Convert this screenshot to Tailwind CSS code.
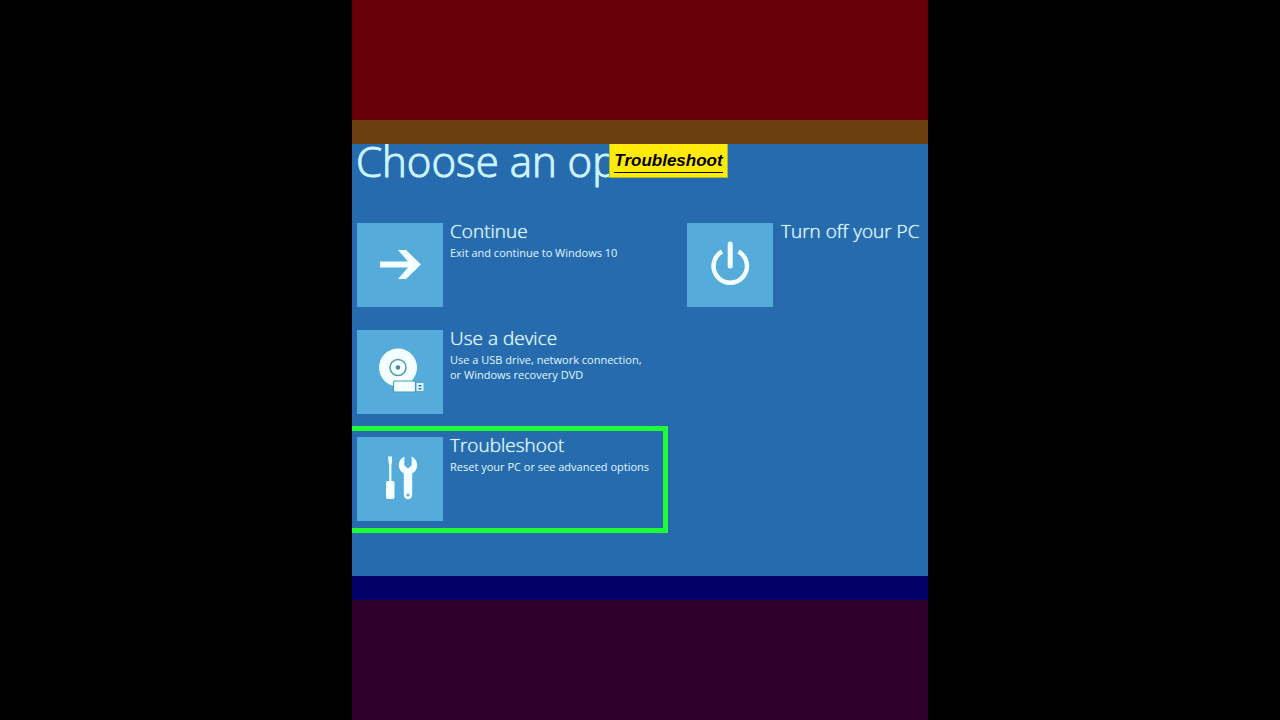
<!DOCTYPE html>
<html lang="en">
<head>
<meta charset="utf-8">
<meta name="viewport" content="width=device-width, initial-scale=1">
<title>Choose an option</title>
<script src="https://cdn.jsdelivr.net/npm/@tailwindcss/browser@4"></script>
</head>
<body class="bg-black font-['Open_Sans','Noto_Sans',sans-serif] text-[#e0f8ff]">
<div class="mx-auto flex min-h-screen max-w-xl flex-col">
  <div class="min-h-30 flex-1 bg-[#660006]"></div>
  <div class="h-6 bg-[#6b4011]"></div>
  <main class="relative bg-[#256bae] pb-[43px]">
    <h1 class="h-[68px] pl-1 text-[42px] leading-[34px] font-light whitespace-nowrap text-[#cdf5ff] [-webkit-text-stroke:1px_#cdf5ff]">Choose an option</h1>
    <div class="absolute top-0 left-[257px] flex h-[34px] w-[119px] items-center justify-center border border-t-0 border-[#a9b83c] bg-[#ffea0a] pt-0.5 font-['Liberation_Sans',sans-serif] text-black">
      <span class="border-b border-black text-[17px] leading-[22px] font-semibold italic">Troubleshoot</span>
    </div>
    <div class="flex items-start">
      <div class="flex w-[330px] shrink-0 flex-col items-start">
        <button type="button" class="flex w-[316px] items-start gap-[7px] border-[5px] border-l-0 border-transparent pt-1.5 pb-[7px] pl-[5px] text-left">
          <span class="flex h-[84px] w-[86px] shrink-0 items-center justify-center bg-[#55abda]">
            <svg class="h-[84px] w-[86px]" viewBox="0 0 86 84" fill="#f4ffff" aria-hidden="true"><path d="M23 38.500H51L41 27H49L64 41.500L49 56H41L51 44.500H23Z"/></svg>
          </span>
          <span class="flex flex-col whitespace-nowrap">
            <span class="h-[22px] text-[19px] leading-4 font-light [text-shadow:0_0_1px_#cdf5ff]">Continue</span>
            <span class="text-[11px] leading-[15px]">Exit and continue to Windows 10</span>
          </span>
        </button>
        <button type="button" class="flex w-[316px] items-start gap-[7px] border-[5px] border-l-0 border-transparent pt-1.5 pb-[7px] pl-[5px] text-left">
          <span class="flex h-[84px] w-[86px] shrink-0 items-center justify-center bg-[#55abda]">
            <svg class="h-[84px] w-[86px]" viewBox="0 0 86 84" aria-hidden="true">
              <circle cx="41" cy="37.500" r="19" fill="#f4ffff"/>
              <circle cx="41" cy="37.500" r="8" fill="none" stroke="#5299ad" stroke-width="1.500"/>
              <circle cx="41" cy="37.500" r="2.300" fill="#4689a2"/>
              <rect x="36.500" y="51" width="22" height="11" rx="1.500" fill="#f4ffff" stroke="#489bbd" stroke-width="1.200"/>
              <rect x="59.500" y="53" width="7" height="8" fill="#e1f7fc"/>
              <path d="M61.500 55h3v1.500h-3zM61.500 58h3v1.500h-3z" fill="#327ba6"/>
            </svg>
          </span>
          <span class="flex flex-col whitespace-nowrap">
            <span class="h-[22px] text-[19px] leading-4 font-light [text-shadow:0_0_1px_#cdf5ff]">Use a device</span>
            <span class="text-[11px] leading-[15px]">Use a USB drive, network connection,<br>or Windows recovery DVD</span>
          </span>
        </button>
        <button type="button" class="flex w-[316px] items-start gap-[7px] border-[5px] border-l-0 border-[#20ff35] pt-1.5 pb-[7px] pl-[5px] text-left">
          <span class="flex h-[84px] w-[86px] shrink-0 items-center justify-center bg-[#55abda]">
            <svg class="h-[84px] w-[86px]" viewBox="0 0 86 84" fill="#f4ffff" aria-hidden="true">
              <path d="M31 19.500h4v5.500l-.6 3v16h1.600q1.500 0 1.500 2v14q0 2-1.500 2h-5.500q-1.500 0-1.500-2v-14q0-2 1.500-2h1.700v-16l-.7-3Z"/>
              <path fill-rule="evenodd" d="M47.500 19.500l-.3 8.500 3.800 3.500 3.800-3.500-.3-8.500c3.500 1.500 5.700 5 5.700 8.500 0 4-2 7-5 8.500v21.500a4.200 4.200 0 0 1-8.400 0V36.500c-3-1.500-5-4.500-5-8.500 0-3.500 2.200-7 5.700-8.500ZM51 56.500a1.500 1.500 0 1 0 0 3 1.500 1.500 0 0 0 0-3Z"/>
            </svg>
          </span>
          <span class="flex flex-col whitespace-nowrap">
            <span class="h-[22px] text-[19px] leading-4 font-light [text-shadow:0_0_1px_#cdf5ff]">Troubleshoot</span>
            <span class="text-[11px] leading-[15px]">Reset your PC or see advanced options</span>
          </span>
        </button>
      </div>
      <button type="button" class="flex flex-1 items-start gap-2 border-y-[5px] border-transparent pt-1.5 pb-[7px] pl-[5px] text-left">
        <span class="flex h-[84px] w-[86px] shrink-0 items-center justify-center bg-[#55abda]">
          <svg class="h-[84px] w-[86px]" viewBox="0 0 86 84" fill="none" stroke="#f4ffff" aria-hidden="true"><path d="M35 28.500a16.700 16.700 0 1 0 16.500 0" stroke-width="4.500"/><path d="M43.200 21v22" stroke-width="5" stroke-linecap="round"/></svg>
        </span>
        <span class="text-[19px] leading-4 font-light whitespace-nowrap [text-shadow:0_0_1px_#cdf5ff]">Turn off your PC</span>
      </button>
    </div>
  </main>
  <div class="h-6 bg-[#000066]"></div>
  <div class="min-h-30 flex-1 bg-[#30002c]"></div>
</div>
</body>
</html>
